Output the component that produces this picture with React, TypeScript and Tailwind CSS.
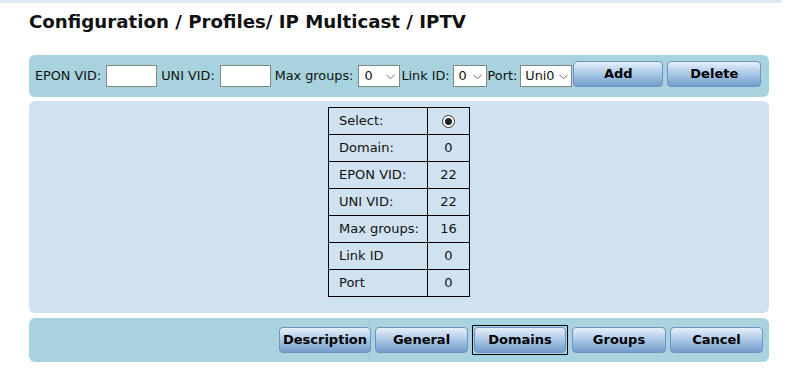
import React from "react";

function Field({ label, width }: { label: string; width: number }) {
  return (
    <>
      <span className="whitespace-nowrap">{label}</span>
      <div
        className="h-[22px] border border-[#858585] bg-white ml-[5px] mr-[4px]"
        style={{ width }}
      />
    </>
  );
}

function Select({ value, width }: { value: string; width: number }) {
  return (
    <div
      className="flex h-[22px] items-center justify-between border border-[#858585] bg-white pl-[5px] pr-[4px]"
      style={{ width }}
    >
      <span>{value}</span>
      <svg width="9" height="6" viewBox="0 0 9 6" className="mt-[1px]">
        <path d="M0.5 0.8 L4.5 4.8 L8.5 0.8" fill="none" stroke="#6b6b6b" strokeWidth="1" />
      </svg>
    </div>
  );
}

function Button({
  label,
  width,
  focused = false,
}: {
  label: string;
  width: number;
  focused?: boolean;
}) {
  return (
    <div className={focused ? "border border-black p-px" : "p-0"}>
      <div
        className="flex h-[26px] items-center justify-center rounded-[4px] border border-[#6f93c2] bg-gradient-to-b from-[#e6f0fb] via-[#a9c7e6] to-[#729dcc] text-[13px] font-bold text-black"
        style={{ width: focused ? width - 4 : width }}
      >
        {label}
      </div>
    </div>
  );
}

const rows: [string, string][] = [
  ["Select:", "radio"],
  ["Domain:", "0"],
  ["EPON VID:", "22"],
  ["UNI VID:", "22"],
  ["Max groups:", "16"],
  ["Link ID", "0"],
  ["Port", "0"],
];

export default function App() {
  return (
    <div className="w-[792px] h-[379px] bg-white text-[13px] text-[#111] font-['DejaVu_Sans',Verdana,sans-serif]">
      <div className="h-[3px] w-[782px] bg-[#dce9f4]" />

      <h1 className="ml-[29px] mt-[8px] text-[18.2px] font-bold leading-[22px] text-[#111]">
        Configuration / Profiles/ IP Multicast / IPTV
      </h1>

      <div className="ml-[29px] mt-[22px] flex h-[42px] w-[740px] items-center rounded-[6px] bg-[#a6d3dd] pl-[6px] text-[12.8px]">
        <Field label="EPON VID:" width={51} />
        <Field label="UNI VID:" width={51} />
        <span className="mr-[5px] whitespace-nowrap">Max groups:</span>
        <Select value="0" width={42} />
        <span className="ml-[1px] mr-[3px] whitespace-nowrap">Link ID:</span>
        <Select value="0" width={34} />
        <span className="ml-[1px] mr-[3px] whitespace-nowrap">Port:</span>
        <div
          className="flex h-[22px] w-[52px] items-center justify-between border border-[#858585] bg-white pl-[4px] pr-[3px]"
        >
          <span>Uni0</span>
          <svg width="9" height="6" viewBox="0 0 9 6" className="mt-[1px]">
            <path d="M0.5 0.8 L4.5 4.8 L8.5 0.8" fill="none" stroke="#6b6b6b" strokeWidth="1" />
          </svg>
        </div>
        <div className="ml-[1px] -mt-[4px] flex gap-[4px]">
          <Button label="Add" width={90} />
          <Button label="Delete" width={94} />
        </div>
      </div>

      <div className="ml-[29px] mt-[4px] flex h-[212px] w-[740px] justify-center rounded-[6px] bg-[#d0e2ef] pt-[6px]">
        <table className="h-[190px] border-collapse border border-black self-start">
          <tbody>
            {rows.map(([label, value]) => (
              <tr key={label} className="h-[27px]">
                <td className="w-[99px] border border-black pl-[10px] text-left">{label}</td>
                <td className="w-[42px] border border-black text-center">
                  {value === "radio" ? (
                    <div className="mx-auto flex h-[13px] w-[13px] items-center justify-center rounded-full border border-[#333] bg-white">
                      <div className="h-[7px] w-[7px] rounded-full bg-[#222]" />
                    </div>
                  ) : (
                    value
                  )}
                </td>
              </tr>
            ))}
          </tbody>
        </table>
      </div>

      <div className="ml-[29px] mt-[5px] flex h-[44px] w-[740px] items-center justify-end gap-[4px] rounded-[6px] bg-[#a6d3dd] pr-[6px]">
        <Button label="Description" width={92} />
        <Button label="General" width={93} />
        <Button label="Domains" width={96} focused />
        <Button label="Groups" width={94} />
        <Button label="Cancel" width={93} />
      </div>
    </div>
  );
}
